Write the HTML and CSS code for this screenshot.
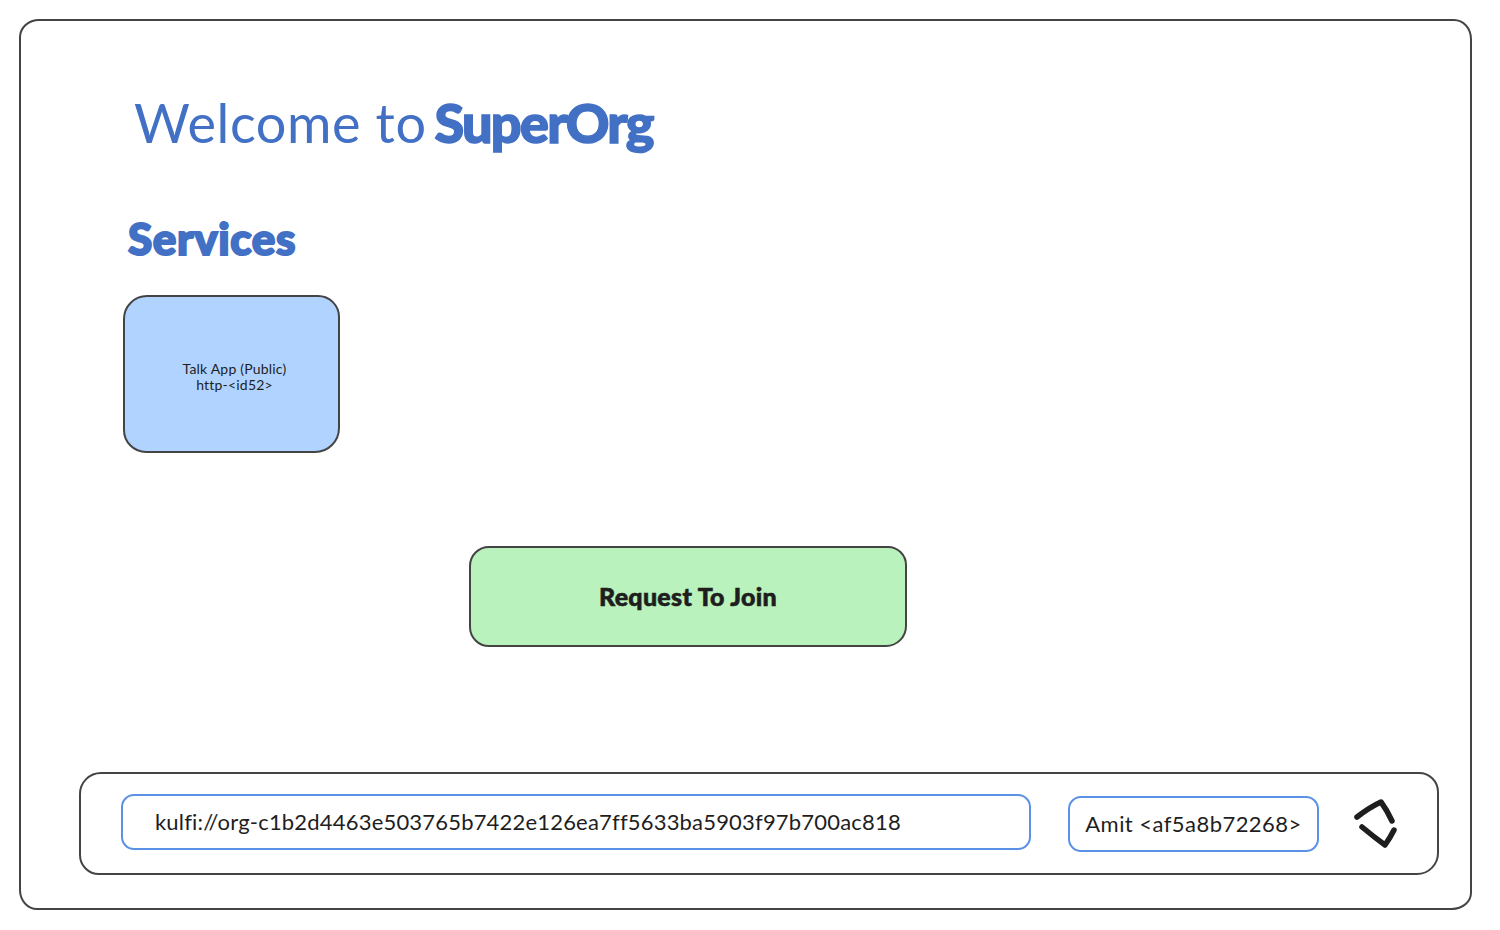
FILE: index.html
```html
<!DOCTYPE html>
<html lang="en">
<head>
<meta charset="UTF-8">
<title>Welcome to SuperOrg</title>
<link rel="stylesheet" href="styles.css">
</head>
<body>
<div class="frame">
  <h1 class="title"><span class="title-lead">Welcome to</span> <span class="title-org">SuperOrg</span></h1>
  <h2 class="section-title">Services</h2>
  <div class="service-card">
    <span>Talk App (Public)</span>
    <span>http-&lt;id52&gt;</span>
  </div>
  <button class="join-btn">Request To Join</button>
  <div class="bottom-bar">
    <div class="url-box">kulfi://org-c1b2d4463e503765b7422e126ea7ff5633ba5903f97b700ac818</div>
    <div class="identity-box">Amit &lt;af5a8b72268&gt;</div>
    <svg class="switch-icon" width="44" height="50" viewBox="0 0 44 50">
      <path d="M3 18 Q16 8 27 3 Q33 11 38 22"/>
      <path d="M8 28 Q20 38 31 46 Q36 39 40 31"/>
    </svg>
  </div>
</div>
</body>
</html>
```

FILE: styles.css
```css
* {
  box-sizing: border-box;
}
body {
  margin: 0;
  padding: 19px 28px 20px 19px;
  height: 930px;
  background: #ffffff;
  font-family: 'Lato', 'Noto Sans', sans-serif;
  color: #1e1e1e;
}
.frame {
  height: 891px;
  border: 2px solid #444444;
  border-top-left-radius: 20px 18px;
  border-top-right-radius: 18px 20px;
  border-bottom-right-radius: 20px 17px;
  border-bottom-left-radius: 18px 20px;
  padding: 70px 31px 33px 58px;
  display: flex;
  flex-direction: column;
}
.title {
  margin: 0 0 0 55px;
  font-size: 54px;
  line-height: 64px;
  font-weight: 400;
  color: #4270c4;
  white-space: nowrap;
  word-spacing: -6px;
}
.title-lead {
  letter-spacing: 0.6px;
  word-spacing: 0;
}
.title-org {
  font-weight: 900;
  letter-spacing: -1.75px;
  -webkit-text-stroke: 1.5px #4270c4;
}
.section-title {
  margin: 55px 0 0 49px;
  font-size: 44px;
  line-height: 56px;
  font-weight: 900;
  letter-spacing: 0.6px;
  color: #4270c4;
  -webkit-text-stroke: 2px #4270c4;
}
.service-card {
  width: 217px;
  height: 158px;
  margin: 29px 0 0 44px;
  background: #b0d4ff;
  border: 2px solid #444444;
  border-radius: 24px 22px 25px 23px;
  padding: 5px 0 0 6px;
  display: flex;
  flex-direction: column;
  align-items: center;
  justify-content: center;
  font-size: 14px;
  line-height: 16px;
  letter-spacing: 0.2px;
}
.join-btn {
  width: 438px;
  height: 101px;
  margin: 93px 0 0 390px;
  padding-bottom: 3px;
  background: #b9f2bc;
  border: 2px solid #444444;
  border-radius: 20px 19px 21px 20px;
  font-family: inherit;
  font-size: 25px;
  font-weight: 900;
  letter-spacing: 0.3px;
  color: #1e1e1e;
  -webkit-text-stroke: 0.6px #1e1e1e;
}
.bottom-bar {
  margin-top: auto;
  height: 103px;
  border: 2px solid #444444;
  border-radius: 22px 20px 22px 20px;
  padding: 0 39px 0 40px;
  display: flex;
  align-items: center;
}
.url-box {
  width: 910px;
  height: 56px;
  margin-top: -4px;
  border: 2px solid #5a90e6;
  border-radius: 13px;
  padding-left: 32px;
  display: flex;
  align-items: center;
  font-size: 22px;
  letter-spacing: 0.19px;
  white-space: nowrap;
}
.identity-box {
  width: 251px;
  height: 56px;
  margin-left: 37px;
  border: 2px solid #5a90e6;
  border-radius: 13px;
  display: flex;
  align-items: center;
  justify-content: center;
  font-size: 22px;
  letter-spacing: 0.45px;
  white-space: nowrap;
}
.switch-icon {
  margin-left: 35px;
  fill: none;
  stroke: #1e1e1e;
  stroke-width: 5.5;
  stroke-linecap: round;
  stroke-linejoin: round;
}
```
